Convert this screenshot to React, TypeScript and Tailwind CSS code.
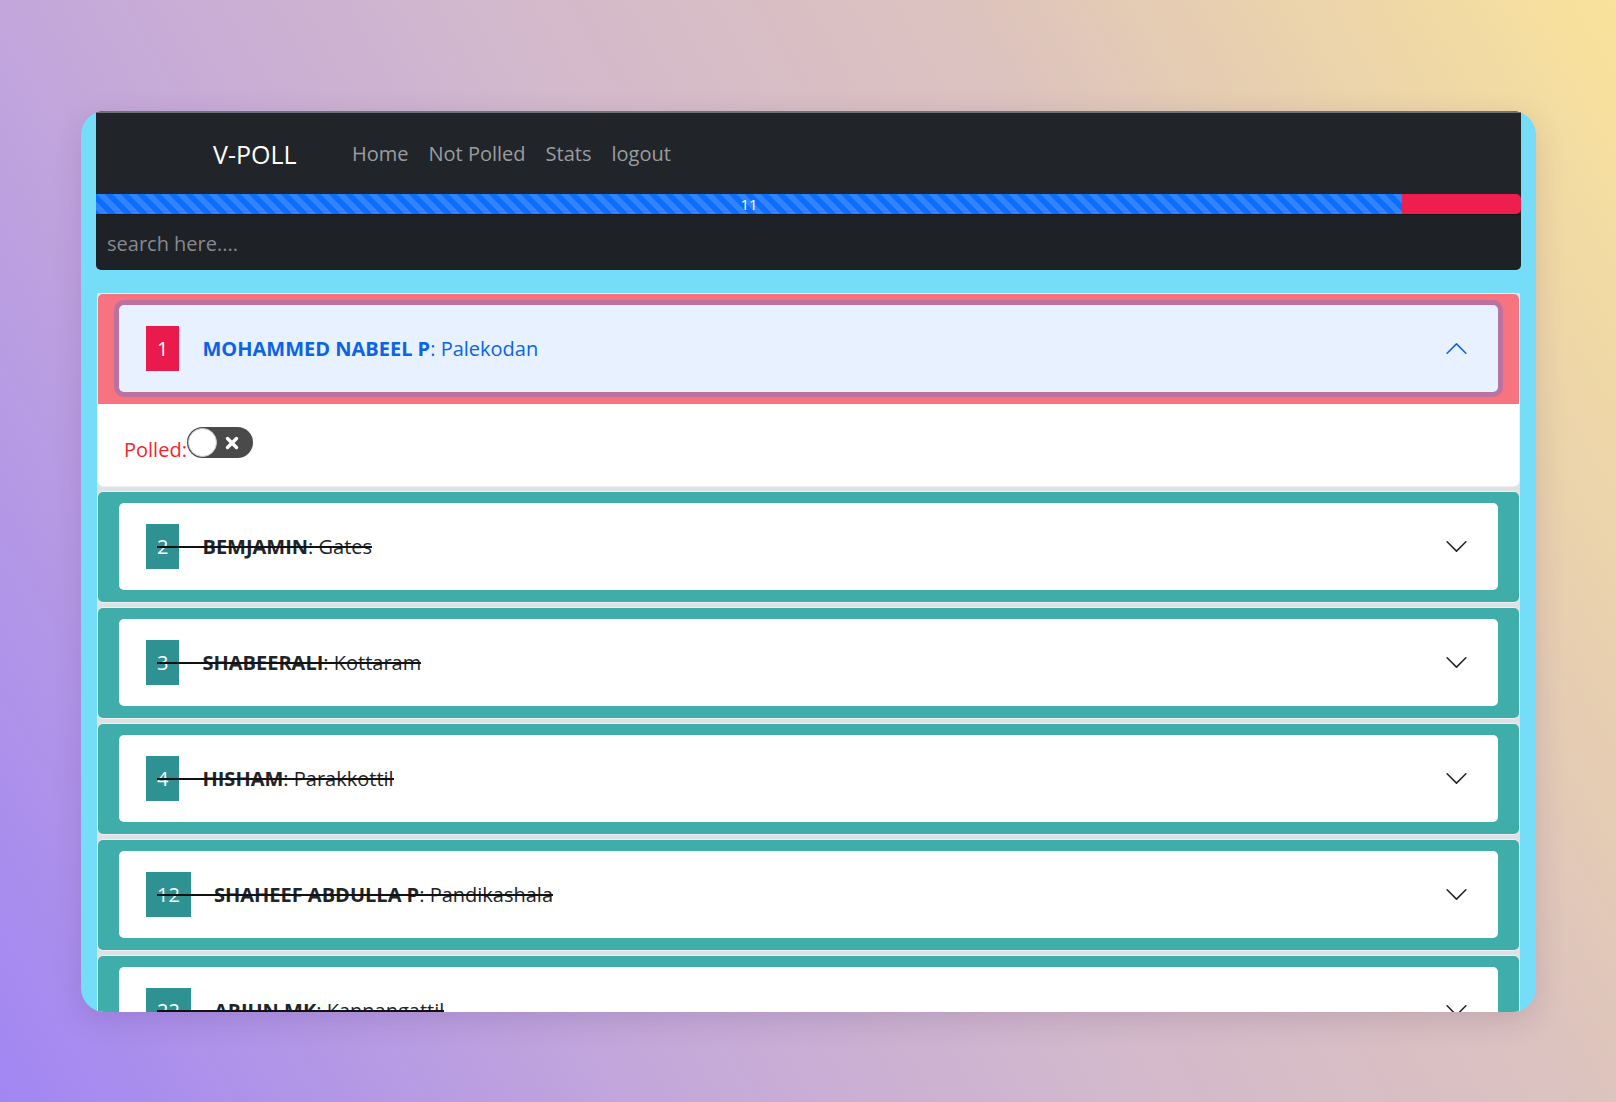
import React from "react";

type Item = {
  n: string;
  name: string;
  place: string;
  open?: boolean;
};

const items: Item[] = [
  { n: "1", name: "MOHAMMED NABEEL P", place: "Palekodan", open: true },
  { n: "2", name: "BEMJAMIN", place: "Gates" },
  { n: "3", name: "SHABEERALI", place: "Kottaram" },
  { n: "4", name: "HISHAM", place: "Parakkottil" },
  { n: "12", name: "SHAHEEF ABDULLA P", place: "Pandikashala" },
  { n: "22", name: "ARJUN MK", place: "Kannangattil" },
];

function Chevron({ up }: { up?: boolean }) {
  return (
    <svg
      viewBox="0 0 16 16"
      width="25"
      height="25"
      className={up ? "rotate-180 text-[#0c63e4]" : "text-[#212529]"}
      fill="currentColor"
    >
      <path
        fillRule="evenodd"
        d="M1.646 4.646a.5.5 0 0 1 .708 0L8 10.293l5.646-5.647a.5.5 0 0 1 .708.708l-6 6a.5.5 0 0 1-.708 0l-6-6a.5.5 0 0 1 0-.708z"
      />
    </svg>
  );
}

function Toggle() {
  return (
    <div className="w-[66px] h-[31px] rounded-full bg-[#4a4a4a] flex items-center">
      <div className="w-[29px] h-[29px] ml-[1px] rounded-full bg-white border border-[#c8c8c8]" />
      <svg width="14" height="14" viewBox="0 0 14 14" className="ml-[8px]">
        <path d="M2.5 2.5 L11.5 11.5 M11.5 2.5 L2.5 11.5" stroke="white" strokeWidth="3.4" strokeLinecap="round" />
      </svg>
    </div>
  );
}

function Row({ item }: { item: Item }) {
  const open = !!item.open;
  return (
    <div className="border border-[#eef0f1] rounded-[6px] overflow-hidden shrink-0">
      <div className={(open ? "bg-[#f7737f]" : "bg-[#3fadaa]") + " pt-[11px] pb-[12px] px-[21px]"}>
        <div
          className={
            (open
              ? "bg-[#e7f1ff] shadow-[0_0_0_5px_rgba(13,110,253,0.25)]"
              : "bg-white") +
            " h-[87px] rounded-[5px] flex items-center pl-[27px] pr-[29px]"
          }
        >
          <div className="relative flex items-center">
            <span
              className={
                (open ? "bg-[#ea1a4c]" : "bg-[#2f9292]") +
                " h-[45px] px-[11px] flex items-center text-white text-[20px] leading-[30px]"
              }
            >
              {item.n}
            </span>
            <span
              className={
                (open ? "text-[#0c63e4]" : "text-[#212529]") + " ml-[23px] text-[20px] leading-[30px]"
              }
            >
              <b className="font-bold">{item.name}</b>: {item.place}
            </span>
            {!open && (
              <div className="absolute left-[11px] right-0 top-[calc(50%-1px)] h-[2px] bg-[#111]" />
            )}
          </div>
          <div className="ml-auto">
            <Chevron up={open} />
          </div>
        </div>
      </div>
      {open && (
        <div className="bg-white h-[82px] pt-[23px] pl-[26px] flex items-start">
          <span className="mt-[8px] text-[20px] leading-[30px] text-[#f2262c]">Polled:</span>
          <Toggle />
        </div>
      )}
    </div>
  );
}

export default function App() {
  return (
    <div
      className="w-[1616px] h-[1102px] overflow-hidden pt-[111px] pl-[81px] bg-[linear-gradient(60deg,#a286f3_0%,#c4a8da_30%,#d3b9cc_50%,#dcc2bf_70%,#f9e39a_100%)]"
      style={{ fontFamily: '"Open Sans", "Noto Sans", sans-serif' }}
    >
      <div className="w-[1455px] h-[901px] rounded-[24px] bg-[#75ddf7] overflow-hidden px-[15px] shadow-[0_8px_30px_rgba(60,30,90,0.15)]">
        <nav className="h-[83px] bg-[#212529] border-t-2 border-[#6f7276] flex items-center">
          <div className="ml-[117px] w-[129px] text-white text-[25px] leading-[36px]">V-POLL</div>
          <ul className="flex items-center text-[20px] leading-[30px] text-[#9a9da0]">
            <li className="px-[10px]">Home</li>
            <li className="px-[10px]">Not Polled</li>
            <li className="px-[10px]">Stats</li>
            <li className="px-[10px]">logout</li>
          </ul>
        </nav>
        <div className="flex h-[20px] bg-[#212529]">
          <div className="w-[91.667%] h-full bg-[#0d6efd] bg-[linear-gradient(45deg,rgba(255,255,255,0.15)_25%,transparent_25%,transparent_50%,rgba(255,255,255,0.15)_50%,rgba(255,255,255,0.15)_75%,transparent_75%,transparent)] bg-[length:16px_16px] flex items-center justify-center text-white text-[15px] leading-none">
            11
          </div>
          <div className="flex-1 h-full bg-[#ee1f4e] rounded-r-[5px]" />
        </div>
        <input
          placeholder="search here...."
          className="block w-full h-[56px] bg-[#1e2125] border-t border-[#15171a] rounded-b-[5px] pl-[11px] pt-[2px] text-[20px] text-[#e0e0e0] placeholder:text-[#868a8e] outline-none"
        />
        <div className="mt-[23px] mx-[1px] flex flex-col gap-[4px] bg-[#dde1e4]">
          {items.map((it) => (
            <Row key={it.n} item={it} />
          ))}
        </div>
      </div>
    </div>
  );
}
